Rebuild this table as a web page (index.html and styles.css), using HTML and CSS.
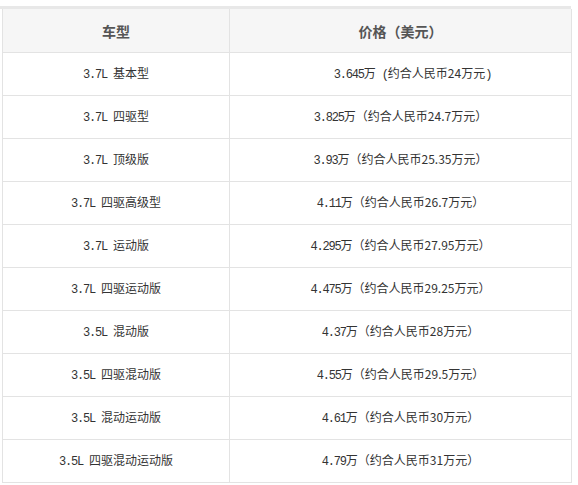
FILE: index.html
```html
<!DOCTYPE html>
<html lang="zh-CN">
<head>
<meta charset="utf-8">
<title>价格表</title>
<link rel="stylesheet" href="styles.css">
</head>
<body>
<div class="band"></div>
<table class="price-table">
  <colgroup><col class="c1"><col class="c2"></colgroup>
  <thead>
    <tr><th>车型</th><th>价格（美元）</th></tr>
  </thead>
  <tbody>
    <tr><td><span class="m">3.7L </span>基本型</td><td><span class="m">&nbsp;&nbsp;&nbsp;&nbsp;3.645</span>万<span class="m"> (</span>约合人民币24万元<span class="m">)</span></td></tr>
    <tr><td><span class="m">3.7L </span>四驱型</td><td><span class="m">3.825</span>万（约合人民币24.7万元）</td></tr>
    <tr><td><span class="m">3.7L </span>顶级版</td><td><span class="m">3.93</span>万（约合人民币25.35万元）</td></tr>
    <tr><td><span class="m">3.7L </span>四驱高级型</td><td><span class="m">4.11</span>万（约合人民币26.7万元）</td></tr>
    <tr><td><span class="m">3.7L </span>运动版</td><td><span class="m">4.295</span>万（约合人民币27.95万元）</td></tr>
    <tr><td><span class="m">3.7L </span>四驱运动版</td><td><span class="m">4.475</span>万（约合人民币29.25万元）</td></tr>
    <tr><td><span class="m">3.5L </span>混动版</td><td><span class="m">4.37</span>万（约合人民币28万元）</td></tr>
    <tr><td><span class="m">3.5L </span>四驱混动版</td><td><span class="m">4.55</span>万（约合人民币29.5万元）</td></tr>
    <tr><td><span class="m">3.5L </span>混动运动版</td><td><span class="m">4.61</span>万（约合人民币30万元）</td></tr>
    <tr><td><span class="m">3.5L </span>四驱混动运动版</td><td><span class="m">4.79</span>万（约合人民币31万元）</td></tr>
  </tbody>
</table>
</body>
</html>
```
FILE: styles.css
```css
html, body {
  margin: 0;
  padding: 0;
  background: #ffffff;
}
body {
  font-family: "Noto Sans CJK SC", "Liberation Sans", sans-serif;
  font-size: 12px;
  color: #333333;
}
.band {
  margin-top: 6px;
  width: 571px;
  height: 3px;
  background: #e8e8e8;
}
.price-table {
  margin-left: 2px;
  width: 570px;
  table-layout: fixed;
  border-collapse: separate;
  border-spacing: 0;
  border-left: 1px solid #e3e3e3;
  border-right: 1px solid #e3e3e3;
}
.c1 { width: 227px; }
.price-table th,
.price-table td {
  box-sizing: border-box;
  padding: 0;
  text-align: center;
  vertical-align: middle;
  border-bottom: 1px solid #e3e3e3;
  white-space: nowrap;
  line-height: 16px;
}
.price-table th:first-child,
.price-table td:first-child {
  border-right: 1px solid #e3e3e3;
}
.price-table th {
  background: #f6f6f6;
  height: 44px;
  font-size: 14px;
  font-weight: bold;
  color: #555555;
}
.price-table td {
  height: 43px;
}
.m {
  font-family: "Liberation Mono", monospace;
  font-size: 12px;
  letter-spacing: -1.2px;
}
```
